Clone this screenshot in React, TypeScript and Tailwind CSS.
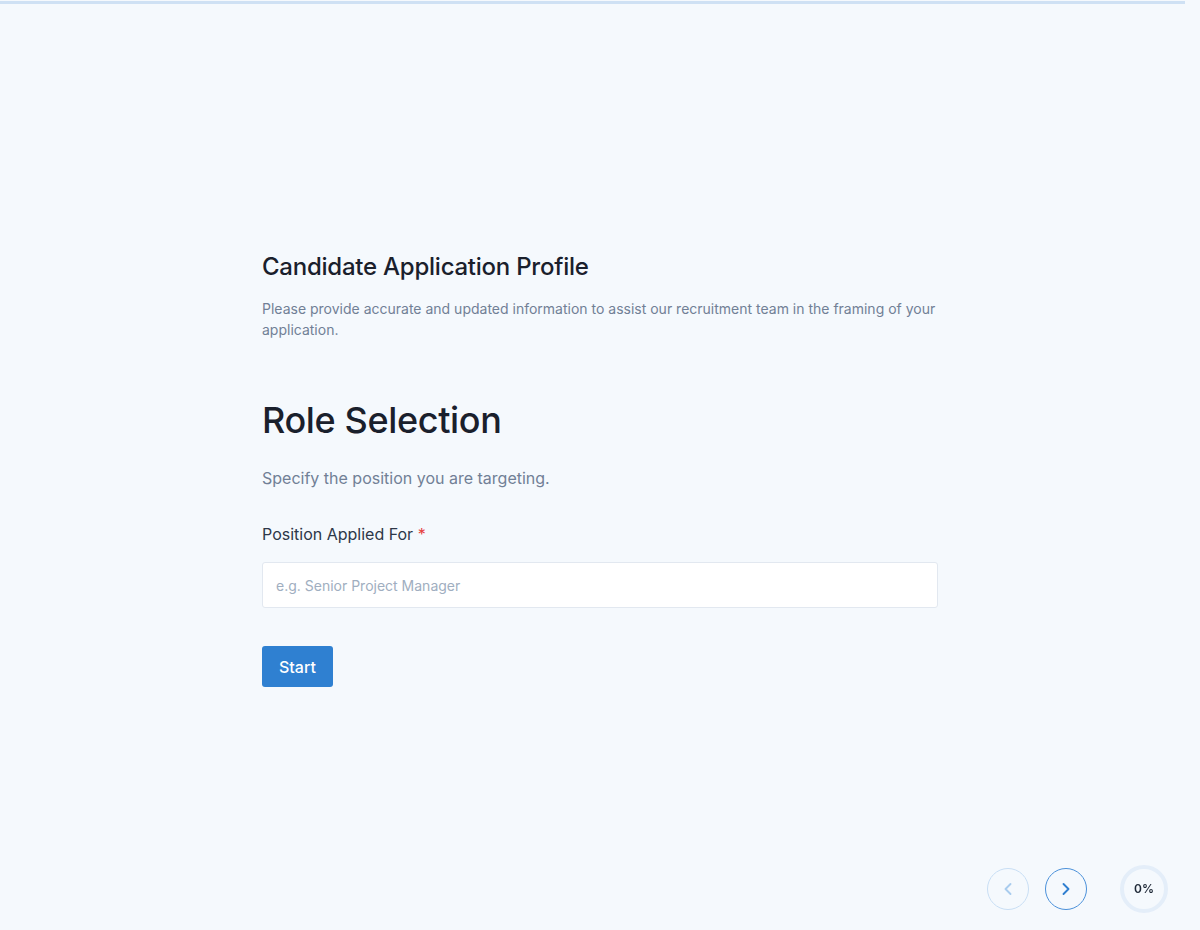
import { ChevronLeft, ChevronRight } from "lucide-react"

function ProgressRing({ value }: { value: number }) {
  const r = 22
  const c = 2 * Math.PI * r
  return (
    <div className="relative w-12 h-12">
      <svg width="48" height="48" viewBox="0 0 48 48" className="-rotate-90">
        <circle cx="24" cy="24" r={r} fill="none" stroke="#e4eef9" strokeWidth="4" />
        <circle
          cx="24"
          cy="24"
          r={r}
          fill="none"
          stroke="#2f80d1"
          strokeWidth="4"
          strokeDasharray={c}
          strokeDashoffset={c - (c * value) / 100}
        />
      </svg>
      <span className="absolute inset-0 flex items-center justify-center text-[12px] font-semibold text-[#1f2937]">
        {value}%
      </span>
    </div>
  )
}

export default function App() {
  return (
    <div
      className="min-h-[930px] bg-[#f5f9fd] text-[#1a202c]"
      style={{ fontFamily: "Inter, 'Noto Sans', sans-serif" }}
    >
      <div className="pt-px">
        <div className="h-[3px] w-[1185px] bg-[#cfe1f4]" />
      </div>

      <main className="mx-auto w-[676px] pt-[247px]">
        <h1 className="text-2xl leading-8 font-medium tracking-[-0.01em] text-[#1a202c]">
          Candidate Application Profile
        </h1>
        <p className="mt-[15px] text-sm leading-[21px] text-[#718096]">
          Please provide accurate and updated information to assist our recruitment team in the framing of your
          application.
        </p>

        <h2 className="mt-[60px] text-4xl leading-10 font-medium tracking-[-0.01em] text-[#1a202c]">
          Role Selection
        </h2>
        <p className="mt-[26px] text-base leading-6 text-[#718096]">Specify the position you are targeting.</p>

        <form className="mt-8" onSubmit={(e) => e.preventDefault()}>
          <label className="block text-base leading-6 text-[#2d3748]">
            Position Applied For <span className="text-[#e53e3e]">*</span>
          </label>
          <input
            type="text"
            placeholder="e.g. Senior Project Manager"
            className="mt-4 block w-full h-[46px] rounded-[3px] border border-[#e2e8f0] bg-white px-[13px] text-sm text-[#1a202c] placeholder:text-[#a0aec0] outline-none"
          />
          <button className="mt-[38px] h-[41px] px-[17px] rounded-[3px] bg-[#2f80d1] text-base font-medium text-white">
            Start
          </button>
        </form>
      </main>

      <div className="fixed right-8 bottom-[17px] flex items-center">
        <button className="w-[42px] h-[42px] rounded-full border border-[#c8def4] flex items-center justify-center text-[#a9ccee]">
          <ChevronLeft size={20} strokeWidth={2.25} />
        </button>
        <button className="ml-4 w-[42px] h-[42px] rounded-full border border-[#4a90d9] flex items-center justify-center text-[#2f7fd0]">
          <ChevronRight size={20} strokeWidth={2.25} />
        </button>
        <div className="ml-[33px]">
          <ProgressRing value={0} />
        </div>
      </div>
    </div>
  )
}
